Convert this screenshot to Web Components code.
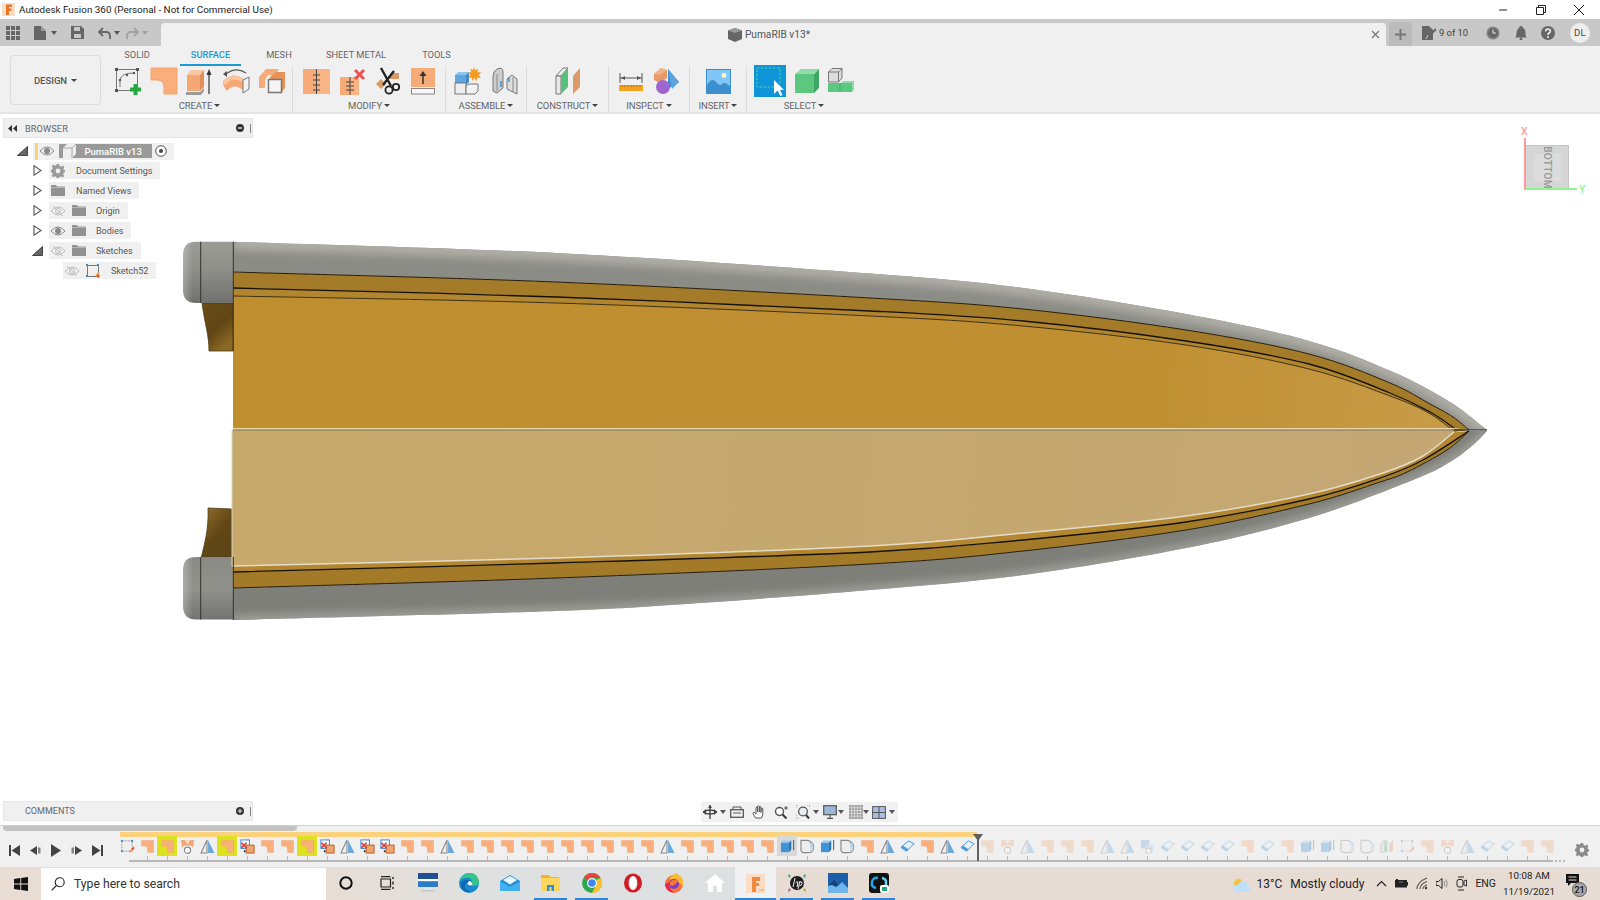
<!DOCTYPE html>
<html>
<head>
<meta charset="utf-8">
<title>Fusion 360</title>
<style>
  html, body { margin: 0; padding: 0; height: 100%; overflow: hidden; background: #fff; }
  body { font-family: Roboto, "Liberation Sans", sans-serif; }
  fx-app { width: 1600px; height: 900px; }
</style>
</head>
<body>
<fx-app></fx-app>
<script>
// --- icon table, every icon is the inside of an svg
const FILL = (a, b) => `<path d="M1 1H27V27H14V20Q14 13 7 13H1Z" fill="${a}" stroke="${b}"/>`;
const ICONS = {
  fill: [28, 28, FILL('#f9ae7c', '#f3a36d')],
  sketch: [28, 28, `<g fill="none" stroke="#777"><rect x="2.5" y="2.5" width="21" height="21"/><path d="M6 20V13Q7 6 20 6"/></g><g fill="#555"><rect x="1" y="1" width="3" height="3"/><rect x="22" y="1" width="3" height="3"/><rect x="1" y="22" width="3" height="3"/><circle cx="6" cy="13" r="1.2"/><circle cx="13" cy="8" r="1.2"/><circle cx="20" cy="6" r="1.2"/></g><rect x="19.5" y="17" width="4" height="11" fill="#27a845"/><rect x="16" y="20.5" width="11" height="4" fill="#27a845"/>`],
  extrude: [28, 28, `<path d="M1 8 5 3H18L14 8Z" fill="#f9c7a2"/><path d="M1 8H14V24H1Z" fill="#f6a874"/><path d="M14 8 18 3V20L14 24Z" fill="#e38f55"/><path d="M0 25H14L18 21V24L15 28H0Z" fill="#9b9b9b"/><path d="M23 27V6" stroke="#333" stroke-width="1.2"/><path d="M23 2 20.5 8H25.5Z" fill="#333"/>`],
  sweep: [28, 28, `<path d="M3 8Q13 -1 24 6" fill="none" stroke="#555" stroke-width="1.2"/><path d="M1 7 5 4 5 10Z" fill="#555"/><path d="M1 14Q11 4 22 12V24Q12 15 5 24Q1 20 1 14Z" fill="#f6a874"/><path d="M1 14Q11 4 22 12L20 15Q11 9 3 18Z" fill="#f9c7a2"/><path d="M21 13 27 10V22L21 26Z" fill="#f2f2f2" stroke="#777"/>`],
  patch: [28, 28, `<path d="M1 10 8 2H21L17 8H10L7 13V21H1Z" fill="#f7ab78"/><path d="M12 10 18 5H27V21L23 26H12Z" fill="#e6935a"/><rect x="10.5" y="12.5" width="13" height="13" fill="#f4f4f4" stroke="#777" stroke-width="1.5"/>`],
  stitch: [27, 27, `<rect x="0" y="1" width="13" height="25" fill="#f7ab78"/><rect x="14" y="1" width="13" height="25" fill="#f9b486"/><path d="M13.5 1V26M10 7H17M10 12H17M10 17H17M10 22H17" stroke="#444" fill="none"/>`],
  trim: [27, 27, `<rect x="1" y="9" width="10" height="18" fill="#f7ab78"/><rect x="11" y="9" width="9" height="18" fill="#f9b486"/><path d="M11 9V27M7 14H15M7 18H15M7 22H15" stroke="#444" fill="none"/><path d="M16 2 25 11M25 2 16 11" stroke="#ef5350" stroke-width="3"/>`],
  scissors: [26, 28, `<rect x="15" y="6" width="9" height="6" fill="#d99a66"/><path d="M1 17 6 12 11 17 6 22Z" fill="#d99a66"/><g fill="none" stroke="#222" stroke-width="2.4"><path d="M6 1 16 19M19 4 8 18"/></g><g fill="none" stroke="#222" stroke-width="1.8"><circle cx="14" cy="23" r="3.6"/><circle cx="21" cy="20" r="3.2"/></g>`],
  offset: [26, 27, `<rect x="1" y="0" width="24" height="19" fill="#f7ab78"/><path d="M13 16V7" stroke="#333" stroke-width="1.5"/><path d="M13 3 9.5 8H16.5Z" fill="#333"/><rect x="1.5" y="20.5" width="23" height="5.5" fill="#f6f6f6" stroke="#888"/>`],
  comp: [28, 28, `<path d="M1 8 4 5H15L12 8Z" fill="#8cc4ef"/><rect x="1" y="8" width="11" height="10" fill="#5ca6e2"/><path d="M12 8 15 5V15L12 18Z" fill="#3f88c6"/><rect x="1" y="16" width="11" height="11" fill="#eee" stroke="#777"/><path d="M12 19 15 17H24V24L21 27H12Z" fill="#f2f2f2" stroke="#777"/><path d="M20 0 21.3 3.5 24 1.5 23.5 5 27.5 5.7 24.5 8 27 11 23.3 10.6 22.8 14 20.5 11.3 18 14 17.7 10.5 14 11 16.5 8 13.5 6 17.3 5 16.5 1.5 19 3.2Z" fill="#f59a23"/>`],
  joint: [26, 28, `<path d="M1 10Q1 4 5 2L9 1Q11 2 11 5V21L5 26 1 24Z" fill="#ccc" stroke="#777"/><path d="M25 12V27L15 22V12L20 8Z" fill="#ddd" stroke="#777"/><path d="M9 14V20M17 10V15" stroke="#2f8fd6" stroke-width="1.4"/><path d="M5 7V24M21 10V25" stroke="#888"/>`],
  plane: [26, 28, `<path d="M1 9 8 1H13L6 9Z" fill="#eee" stroke="#777"/><path d="M1 9H6V27H1Z" fill="#e8e8e8" stroke="#777"/><path d="M6 9 13 1V20L6 27Z" fill="#58bf7d"/><path d="M18 9 25 1V20L18 27Z" fill="#de9a66"/>`],
  measure: [24, 20, `<path d="M1 2V12M23 2V12M1 7H23" stroke="#555" fill="none"/><path d="M2 7 6 5V9ZM22 7 18 5V9Z" fill="#555"/><rect x="0" y="14" width="24" height="6" fill="#f5a31d"/><path d="M3 14V16M6 14V16M9 14V16M12 14V16M15 14V16M18 14V16M21 14V16" stroke="#a8700d"/>`],
  section: [28, 28, `<path d="M2 7 9 1 15 3 15 11 8 16 2 13Z" fill="#e79a67"/><path d="M2 7 9 1 15 3 8 8Z" fill="#f2b48a"/><path d="M16 2 27 15 16 22Z" fill="#3f8fd0"/><path d="M16 2 20 22 27 15Z" fill="#5aa4df"/><circle cx="11" cy="20" r="7" fill="#a165cf"/>`],
  image: [25, 25, `<rect x=".5" y=".5" width="24" height="24" fill="#80c6f6" stroke="#3a8fd0"/><circle cx="18" cy="6.5" r="2.4" fill="#fff7c8"/><path d="M1 22V16Q6 8 10 13T16 15 24 17V24H1Z" fill="#3d90ce"/>`],
  select: [32, 32, `<rect width="32" height="32" fill="#0e94d8"/><rect x="3" y="3" width="23" height="19" fill="none" stroke="#57d38b" stroke-dasharray="2.5 1.5"/><path d="M20 15V29L23.5 25.5 26.5 31 28.5 30 26 25H30Z" fill="#fff"/>`],
  boxsel: [26, 26, `<path d="M1 6 7 1H25L19 6Z" fill="#8fdca6"/><rect x="1" y="6" width="19" height="19" fill="#5cc77e"/><path d="M20 6 25 1V20L20 25Z" fill="#3fa765"/>`],
  bodysel: [26, 26, `<rect x="0" y="15" width="24" height="9" fill="#5cc77e"/><path d="M13 15 15 13H26V22L24 24V15Z" fill="#8fdca6"/><path d="M12 15V24" stroke="#48ad6b"/><path d="M.5 4 4 .5H14V10L10.500 14H.5Z" fill="#ddd" stroke="#777"/><path d="M.5 4H10.500V14M10.500 4 14 .5" fill="none" stroke="#777"/>`],
  // strip icons
  apps: [14, 14, `<g fill="#666"><rect width="4" height="4"/><rect x="5" width="4" height="4"/><rect x="10" width="4" height="4"/><rect y="5" width="4" height="4"/><rect x="5" y="5" width="4" height="4"/><rect x="10" y="5" width="4" height="4"/><rect y="10" width="4" height="4"/><rect x="5" y="10" width="4" height="4"/><rect x="10" y="10" width="4" height="4"/></g>`],
  file: [12, 14, `<path d="M0 0H7L12 5V14H0Z" fill="#666"/><path d="M7 0V5H12" fill="#999"/>`],
  save: [13, 13, `<path d="M0 0H10L13 3V13H0Z" fill="#666"/><rect x="3" y="1" width="6" height="4" fill="#c8c8c8"/><rect x="3" y="8" width="7" height="4" fill="#c8c8c8"/>`],
  undo: [13, 12, `<path d="M5 1 1 5 5 9M1 5H8Q12 5 12 9V12" fill="none" stroke="#666" stroke-width="1.8"/>`],
  redo: [13, 12, `<path d="M8 1 12 5 8 9M12 5H5Q1 5 1 9V12" fill="none" stroke="#a2a2a2" stroke-width="1.8"/>`],
  caret: [6, 4, `<path d="M0 0H6L3 4Z" fill="#555"/>`],
  caretlight: [6, 4, `<path d="M0 0H6L3 4Z" fill="#a2a2a2"/>`],
  doc: [14, 14, `<path d="M7 0 14 2.5V11L7 14 0 11V2.5Z" fill="#666"/><path d="M0 2.5 7 5 14 2.5 7 0Z" fill="#999"/>`],
  x: [9, 9, `<path d="M1 1 8 8M8 1 1 8" stroke="#777" stroke-width="1.2"/>`],
  plus: [11, 11, `<path d="M5.5 0V11M0 5.5H11" stroke="#777" stroke-width="2"/>`],
  vers: [14, 14, `<path d="M0 0H7L11 4V14H0Z" fill="#666"/><path d="M5 12 14 3" stroke="#666" stroke-width="2.2"/><path d="M4 13 6 9" stroke="#ccc"/>`],
  jobs: [14, 14, `<circle cx="7" cy="7" r="6.6" fill="#888"/><circle cx="7" cy="7" r="5" fill="#666"/><path d="M7 3.5V7H10" fill="none" stroke="#ddd" stroke-width="1.1"/>`],
  bell: [12, 14, `<path d="M6 0Q8 0 8 2 10.5 3 10.5 7T12 11.5H0Q1.5 10.5 1.5 7T4 2Q4 0 6 0Z" fill="#666"/><circle cx="6" cy="13" r="1.4" fill="#666"/>`],
  help: [14, 14, `<circle cx="7" cy="7" r="7" fill="#666"/><path d="M4.6 5.4Q4.8 3 7 3T9.4 5.1Q9.4 6.3 8 7 7 7.6 7 9" fill="none" stroke="#eee" stroke-width="1.6"/><circle cx="7" cy="11" r="1" fill="#eee"/>`],
  // browser icons
  eye: [14, 10, `<path d="M0 5Q7 -3 14 5 7 13 0 5Z" fill="none" stroke="#888"/><circle cx="7" cy="5" r="3" fill="#888"/>`],
  eyeoff: [14, 10, `<path d="M0 5Q7 -3 14 5 7 13 0 5Z" fill="none" stroke="#bbb"/><circle cx="7" cy="5" r="2.5" fill="none" stroke="#bbb"/><path d="M2 0 12 10" stroke="#bbb"/>`],
  folder: [14, 11, `<path d="M0 0H5L6 1.5H14V11H0Z" fill="#919191"/><path d="M0 2.5H14" stroke="#b5b5b5"/>`],
  gear: [14, 14, `<path d="M5.8 0H8.2L8.6 2 10.3 2.7 12 1.6 13.4 3.3 12.2 4.9 13 6 14 6.2V8.2L12.9 8.6 12.2 10.2 13.2 12 11.6 13.4 10 12.3 8.5 13 8.2 14H5.8L5.4 12.9 3.9 12.3 2.2 13.3.7 11.8 1.8 10.1 1.1 8.6 0 8.2V5.8L1.2 5.4 1.8 3.8.7 2.3 2.3.8 3.9 1.8 5.4 1.1Z" fill="#9a9a9a"/><circle cx="7" cy="7" r="2.4" fill="#f0f0f0"/>`],
  gear2: [14, 14, `<path d="M5.8 0H8.2L8.6 2 10.3 2.7 12 1.6 13.4 3.3 12.2 4.9 13 6 14 6.2V8.2L12.9 8.6 12.2 10.2 13.2 12 11.6 13.4 10 12.3 8.5 13 8.2 14H5.8L5.4 12.9 3.9 12.3 2.2 13.3.7 11.8 1.8 10.1 1.1 8.6 0 8.2V5.8L1.2 5.4 1.8 3.8.7 2.3 2.3.8 3.9 1.8 5.4 1.1Z" fill="#8b8b8b"/><circle cx="7" cy="7" r="2.4" fill="#f0f0f0"/>`],
  target: [12, 12, `<circle cx="6" cy="6" r="5.3" fill="#fff" stroke="#555"/><circle cx="6" cy="6" r="2" fill="#444"/>`],
  sketchrow: [14, 14, `<rect x="1.5" y="1.5" width="11" height="11" fill="none" stroke="#777"/><path d="M10 12 13 9" stroke="#e8a045" stroke-width="2"/><g fill="#2f8fd6"><rect width="2" height="2"/><rect x="11" width="2" height="2"/><rect y="11" width="2" height="2"/></g><rect x="11" y="11" width="2.5" height="2.5" fill="#e8443a"/>`],
  cubew: [13, 14, `<path d="M0 4 4 0H13V10L9 14H0Z" fill="#eee"/><path d="M0 4H9V14M9 4 13 0" stroke="#aaa" fill="none"/>`],
  rewind: [9, 7, `<path d="M4 0V7L0 3.5ZM9 0V7L5 3.5Z" fill="#333"/>`],
  minus: [11, 11, `<circle cx="5.5" cy="5.5" r="5.5" fill="#333"/><rect x="2.5" y="4.6" width="6" height="1.8" fill="#eee"/>`],
  addc: [11, 11, `<circle cx="5.5" cy="5.5" r="5.5" fill="#333"/><path d="M2.5 5.5H8.5M5.5 2.5V8.5" stroke="#eee" stroke-width="1.5"/>`],
  // navigation bar
  orbit: [14, 14, `<path d="M7 0V14M0 7Q7 3 14 7 7 11 0 7" fill="none" stroke="#444" stroke-width="1.4"/><path d="M0 7 3 4V10ZM14 7 11 4V10ZM7 0 5 3H9Z" fill="#444"/>`],
  look: [14, 12, `<rect x=".7" y="3.7" width="12.6" height="7.6" fill="none" stroke="#555" stroke-width="1.3"/><path d="M3 3.5V1H11V3.5M3 7H11" fill="none" stroke="#555"/>`],
  hand: [14, 14, `<path d="M3.5 13 1 8.5Q1 7 2.4 7.6L4 9V2.5Q5 1.5 5.5 2.5V7 1.3Q6.6.4 7.3 1.3V7 2Q8.3 1 9 2V7.5 3.5Q10 2.6 10.8 3.6V9.5L9.5 13Z" fill="#fff" stroke="#555"/>`],
  zoomin: [14, 14, `<circle cx="5.5" cy="6.5" r="4" fill="#fff" stroke="#555" stroke-width="1.4"/><path d="M8.5 9.5 12.5 13.5" stroke="#333" stroke-width="2"/><path d="M12 1V5M10 3H14" stroke="#555"/>`],
  fit: [14, 14, `<circle cx="7" cy="6.5" r="4.4" fill="#e8eef4" stroke="#555" stroke-width="1.3"/><path d="M10 10 13 13.5" stroke="#333" stroke-width="2"/><path d="M0 3V0H3M11 0H14V3M0 10V14H3" fill="none" stroke="#888" stroke-dasharray="1 1"/>`],
  display: [14, 14, `<rect x=".7" y=".7" width="12.6" height="9" fill="#9cb7da" stroke="#555" stroke-width="1.2"/><path d="M7 10V13M4 13.3H10" stroke="#555" stroke-width="1.2"/>`],
  grid: [14, 14, `<rect width="14" height="14" fill="#999"/><path d="M2.8 0V14M5.6 0V14M8.4 0V14M11.2 0V14M0 2.8H14M0 5.6H14M0 8.4H14M0 11.2H14" stroke="#eee" stroke-width=".7"/>`],
  views: [14, 13, `<rect x=".6" y=".6" width="12.8" height="11.8" fill="#a7bfe0" stroke="#555"/><path d="M7 0V13M0 6.5H14" stroke="#555"/>`],
  // timeline
  tlsketch: [16, 16, `<rect x="2" y="2" width="11" height="11" fill="none" stroke="#999" stroke-dasharray="2 1"/><path d="M10 14 14 10" stroke="#e8a045" stroke-width="2"/><path d="M13 11 15 9" stroke="#e8443a" stroke-width="2"/><g fill="#2f8fd6"><rect x="1" y="1" width="2" height="2"/><rect x="12" y="1" width="2" height="2"/><rect x="1" y="12" width="2" height="2"/></g>`],
  tltrim: [16, 16, `<path d="M1 1H15L14 9 11 7 5 7 2 9Z" fill="#f0a878"/><path d="M5 1 8 6 11 1Z" fill="#fbd7bd"/><circle cx="8" cy="12" r="3.3" fill="#fff" stroke="#888" stroke-width="1.2"/>`],
  tlmirror: [14, 14, `<path d="M6.5 1V13H1Z" fill="#eee" stroke="#888"/><path d="M7.5 1V13H13.5Z" fill="#6ca9da"/>`],
  tldel: [16, 16, `<rect x="1" y="1" width="9" height="9" fill="#fff" stroke="#2f7fd0"/><rect x="6.5" y="6.5" width="8.5" height="8.5" fill="#f2a46f" stroke="#b85a26"/><path d="M1.5 4 7 9.5M7 4 1.5 9.5" stroke="#d93d3d" stroke-width="1.7"/><circle cx="5" cy="13" r="1" fill="#222"/>`],
  tlext: [16, 16, `<path d="M1 4 3.5 1.5H12L9.5 4Z" fill="#9cccf2"/><rect x="1" y="4" width="8.5" height="10" fill="#3f93d8"/><path d="M9.5 4 12 1.5V11.5L9.5 14Z" fill="#2a74b5"/><path d="M14.5 12V1" stroke="#666" stroke-width="1.2"/>`],
  tld: [16, 16, `<path d="M1 1.5H8Q14.5 3 14.5 9T8 14.5H3L1 12Z" fill="#eee" stroke="#888" stroke-width="1.2"/><path d="M9 2Q14.5 4 14.5 9 14.5 13 10 14.5Q13 9 9 2Z" fill="#bcd6ec"/>`],
  tlerase: [16, 14, `<path d="M1 8 9 1 15 4 7 12Z" fill="#e8f2fa" stroke="#3f93d8"/><path d="M1 8 7 12 9 10 3 6Z" fill="#4f9bd8"/>`],
  tlbody: [16, 16, `<rect x="1" y="1" width="9" height="9" fill="#6ca9da"/><rect x="6" y="6" width="8" height="8" fill="#a7cdea"/><rect x="6.5" y="10" width="5" height="5" fill="#fff" stroke="#888"/>`],
  tlplane: [16, 16, `<path d="M1 5 5 1V13L1 15Z" fill="#ddd" stroke="#888"/><path d="M5 3 8 1V13L5 15Z" fill="#58bf7d"/><path d="M10 5 14 1V12L10 15Z" fill="#de9a66"/>`],
  // transport
  first: [11, 11, `<rect width="2" height="11" fill="#444"/><path d="M11 0V11L2.5 5.5Z" fill="#444"/>`],
  prev: [11, 9, `<path d="M7 0V9L0 4.5Z" fill="#444"/><rect x="8" y="1.5" width="2.5" height="6" fill="#888"/>`],
  play: [10, 13, `<path d="M0 0V13L10 6.5Z" fill="#444"/>`],
  next: [11, 9, `<path d="M4 0V9L11 4.5Z" fill="#444"/><rect x=".5" y="1.5" width="2.5" height="6" fill="#888"/>`],
  last: [11, 11, `<rect x="9" width="2" height="11" fill="#444"/><path d="M0 0V11L8.5 5.5Z" fill="#444"/>`],
  // taskbar
  win: [14, 14, `<path d="M0 2 6.3 1V6.6H0ZM7.2.9 14 0V6.6H7.2ZM0 7.4H6.3V13L0 12ZM7.2 7.4H14V14L7.2 13.1Z" fill="#111"/>`],
  search: [14, 14, `<circle cx="8.7" cy="5.3" r="4.5" fill="none" stroke="#222" stroke-width="1.1"/><path d="M5.4 8.6 .6 13.4" stroke="#222" stroke-width="1.2"/>`],
  cortana: [14, 14, `<circle cx="7" cy="7" r="5.7" fill="none" stroke="#111" stroke-width="2"/>`],
  taskview: [14, 14, `<path d="M1 3H10.5V11H1ZM1 .7H10.5M1 13.3H10.5" fill="none" stroke="#222" stroke-width="1.2"/><path d="M13 1V3M13 5.5V8.5M13 11V13" stroke="#222" stroke-width="1.4"/>`],
  store: [20, 20, `<rect width="20" height="14" fill="#1f4f96"/><rect y="6" width="20" height="2.5" fill="#fff"/><rect y="8.5" width="20" height="5.5" fill="#2c7bc7"/><rect x="6" y="15" width="8" height="2" fill="#dfe5ea"/><rect x="3" y="17" width="14" height="1.5" fill="#c3c8cc"/>`],
  edge: [20, 20, `<circle cx="10" cy="10" r="10" fill="#1a8ad0"/><path d="M1 7Q4 0 11 0 19 0 20 9 20 13 15 13 11 13 12 10 14 9 12 6 8 3 1 7Z" fill="#35c38b"/><path d="M12 10Q8 8 6 12T12 19Q6 20 2 15Q0 9 6 7 11 6 13 9Z" fill="#0f6ab4"/><path d="M11 8Q14 10 13 12 10 13 8.5 11 9 8 11 8Z" fill="#f4fbff"/>`],
  mail: [20, 16, `<path d="M0 6 10 0 20 6V16H0Z" fill="#1f8fd8"/><path d="M0 6 10 12 20 6V16H0Z" fill="#42b0ea"/><path d="M3 5 10 1 17 5 10 9.5Z" fill="#eaf6ff"/>`],
  explorer: [20, 18, `<path d="M0 1H8L10 3H18V7H0Z" fill="#f0b429"/><rect y="4" width="19" height="13" fill="#ffd75e"/><rect x="6" y="11" width="7" height="6" fill="#2f8fd6"/><rect x="8.5" y="13" width="2" height="4" fill="#ffd75e"/>`],
  chrome: [20, 20, `<circle cx="10" cy="10" r="10" fill="#2fa84f"/><path d="M10 0A10 10 0 0 1 18.7 5H10A5 5 0 0 0 5.5 8L1.8 4.3A10 10 0 0 1 10 0Z" fill="#e5473a"/><path d="M18.7 5A10 10 0 0 1 10 20L14 12A5 5 0 0 0 14 7Z" fill="#fbc02d"/><circle cx="10" cy="10" r="5" fill="#fff"/><circle cx="10" cy="10" r="3.8" fill="#4285f4"/>`],
  opera: [20, 20, `<ellipse cx="10" cy="10" rx="9" ry="9.6" fill="#d01c26"/><ellipse cx="10" cy="10" rx="4.4" ry="7" fill="#f4ecec"/><ellipse cx="10" cy="10" rx="3" ry="6.5" fill="#fff"/>`],
  firefox: [20, 20, `<circle cx="10" cy="11" r="9" fill="#f6743a"/><path d="M17 3Q20 8 19 13 12 6 5 6 10 0 13 0 13 2 17 3Z" fill="#fdb933"/><circle cx="10" cy="11" r="5" fill="#7a3fc4"/><path d="M6 9Q10 5 14 8 12 12 8 13 5 12 6 9Z" fill="#f6743a"/><path d="M1 11Q1 18 10 20 4 15 6 9Z" fill="#e22850"/>`],
  home: [20, 18, `<path d="M10 0 20 9H17V18H12V12H8V18H3V9H0Z" fill="#fff"/>`],
  fusion: [19, 19, `<rect width="19" height="19" fill="#fbdcc4"/><path d="M6 3H14V7H10V9H13V12H10V18H6Z" fill="#f0883e"/><rect x="13" y="15" width="5" height="2" fill="#f0c09a"/>`],
  hp: [20, 20, `<circle cx="10" cy="10" r="7" fill="#1d1d1d"/><path d="M1 1 4 3 2 5ZM19 1 16 3 18 5Z" fill="#2f9a8a"/><path d="M1 19 4 17 2 15Z" fill="#b84a8a"/><path d="M19 19 16 17 18 15Z" fill="#c0a030"/><path d="M8 5 6 14M8.5 10Q10 8 11 9L10 14M13 8 11 16M13 9Q15.5 8 15 10.5T12.5 12.5" fill="none" stroke="#eee" stroke-width="1"/>`],
  photos: [20, 20, `<rect width="20" height="20" fill="#1c5fa8"/><path d="M0 20V13L6 6 11 12 14 9 20 15V20Z" fill="#6fb7ea"/><path d="M0 13 6 6 11 12 8 14 4 12Z" fill="#12437c"/>`],
  conf: [20, 20, `<rect width="20" height="20" rx="3" fill="#121212"/><path d="M9 5Q4 4 3 9T7 15" fill="none" stroke="#1ea8e8" stroke-width="2.5"/><path d="M11 15Q16 16 17 11T13 5" fill="none" stroke="#6ad1f0" stroke-width="2.5"/><rect x="11" y="12" width="9" height="8" rx="2" fill="#fff"/><rect x="13" y="14" width="5" height="4" fill="#1fa67a"/>`],
  cloud: [20, 16, `<path d="M5 12Q0 8 5 4 7 1 11 4L7 9Z" fill="#f5c33b"/><path d="M6 16Q0 14 3 10 5 8 7 9 9 4 14 6 17 7 16 10 20 11 19 14 18 16 15 16Z" fill="#bde0f8"/>`],
  up: [11, 7, `<path d="M1 6 5.5 1.5 10 6" fill="none" stroke="#222" stroke-width="1.2"/>`],
  battery: [13, 9, `<rect y="1" width="12" height="7.5" fill="#222"/><rect x="12" y="3" width="1.5" height="3.5" fill="#222"/><rect x="1" y="0" width="2" height="1" fill="#222"/><path d="M4 3H8" stroke="#777"/>`],
  wifi: [13, 13, `<path d="M1 12Q1 5 11 1M4 12Q4 7 11 4.5M7 12Q7 9 11 8" fill="none" stroke="#555" stroke-width="1.1"/><circle cx="10" cy="11" r="1.2" fill="#333"/>`],
  volume: [13, 13, `<path d="M0 4.5H2.5L6 1.5V11.5L2.5 8.5H0Z" fill="none" stroke="#222"/><path d="M8 4Q9.5 6.5 8 9M10 2.5Q12.5 6.5 10 10.5" fill="none" stroke="#888"/>`],
  meet: [11, 15, `<path d="M2 1H8M2 14H8" stroke="#222"/><rect x="1" y="3.5" width="6" height="7.5" rx="2" fill="none" stroke="#222"/><path d="M8 5 10.5 4V10L8 9Z" fill="none" stroke="#222" stroke-width=".9"/>`],
  note: [13, 12, `<path d="M0 0H13V9H5L2 12V9H0Z" fill="#111"/><path d="M2.5 3H10.5M2.5 6H10.5" stroke="#e8dcd2"/>`],
  fmark: [13, 13, `<rect width="13" height="13" fill="#fbdcc4"/><path d="M4 1.5H10V4H7V5.5H9.5V8H7V12H4Z" fill="#e8762c"/>`],
  min: [10, 10, `<path d="M1 5H9" stroke="#222"/>`],
  restore: [10, 10, `<path d="M.5 2.5H7.5V9.5H.5ZM2.5 2.5V.5H9.5V7.5H7.5" fill="none" stroke="#222"/>`],
  close: [12, 12, `<path d="M1 1 11 11M11 1 1 11" stroke="#222"/>`],
};

class FxIcon extends HTMLElement {
  connectedCallback() {
    const name = this.getAttribute('name');
    const [w, h, body] = ICONS[name];
    const dw = this.getAttribute('w') || w;
    const dh = this.getAttribute('h') || h;
    if (!this.shadowRoot) this.attachShadow({ mode: 'open' });
    this.shadowRoot.innerHTML = `
      <style>:host { display: inline-flex; flex: none; } svg { display: block; }</style>
      <svg width="${dw}" height="${dh}" viewBox="0 0 ${w} ${h}">${body}</svg>`;
  }
}
customElements.define('fx-icon', FxIcon);

// plain shadow element with a fixed template
function plain(tag, html) {
  customElements.define(tag, class extends HTMLElement {
    constructor() {
      super();
      this.attachShadow({ mode: 'open' }).innerHTML = html;
    }
  });
}

plain('fx-app', `
  <style>:host { display: flex; flex-direction: column; overflow: hidden; color: #555; }</style>
  <fx-titlebar></fx-titlebar>
  <fx-tabstrip></fx-tabstrip>
  <fx-toolbar></fx-toolbar>
  <fx-viewport></fx-viewport>
  <fx-timeline></fx-timeline>
  <fx-taskbar></fx-taskbar>`);

plain('fx-titlebar', `
  <style>
    :host { display: flex; align-items: center; height: 19px; background: #fff; padding-left: 2px; flex: none;
      font: 9.9px Roboto, "Liberation Sans", sans-serif; color: #222; }
    span { margin-left: 4px; flex: 1; }
    .c { width: 38px; display: flex; justify-content: center; }
    .c.last { margin-right: 2px; }
  </style>
  <fx-icon name="fmark"></fx-icon><span>Autodesk Fusion 360 (Personal - Not for Commercial Use)</span>
  <div class="c"><fx-icon name="min"></fx-icon></div>
  <div class="c"><fx-icon name="restore"></fx-icon></div>
  <div class="c last"><fx-icon name="close"></fx-icon></div>`);

plain('fx-tabstrip', `
  <style>
    :host { display: flex; height: 27px; background: #c8c8c8; flex: none; align-items: stretch; font: 10.5px Roboto, sans-serif; color: #555; }
    .quick { width: 161px; display: flex; align-items: center; padding-left: 6px; box-sizing: border-box; }
    .doc { width: 1225px; margin-top: 4px; background: #f0f0f0; border-radius: 4px 4px 0 0; display: flex; align-items: center; justify-content: center; position: relative; padding-right: 9px; box-sizing: border-box; }
    .doc span { margin-left: 3px; font-size: 10.2px; color: #555; }
    .doc .shut { position: absolute; right: 6px; top: 7px; }
    .add { width: 23px; margin: 3px 0 0 3px; background: #bbb; border-radius: 3px 3px 0 0; display: flex; align-items: center; justify-content: center; }
    .right { display: flex; align-items: center; flex: 1; padding-left: 10px; }
    .right b { font-weight: 400; font-size: 9.4px; margin-left: 3px; color: #444; width: 47px; }
    .avatar { width: 20px; height: 20px; border-radius: 50%; background: #eee; margin-left: 15px; display: flex; align-items: center; justify-content: center; font-size: 9.5px; color: #444; letter-spacing: .4px; }
  </style>
  <div class="quick">
    <fx-icon name="apps"></fx-icon>
    <fx-icon name="file" style="margin-left:14px"></fx-icon><fx-icon name="caret" style="margin-left:5px"></fx-icon>
    <fx-icon name="save" style="margin-left:14px"></fx-icon>
    <fx-icon name="undo" style="margin-left:14px"></fx-icon><fx-icon name="caret" style="margin-left:3px"></fx-icon>
    <fx-icon name="redo" style="margin-left:6px"></fx-icon><fx-icon name="caretlight" style="margin-left:3px"></fx-icon>
  </div>
  <div class="doc"><fx-icon name="doc"></fx-icon><span>PumaRIB v13*</span><fx-icon class="shut" name="x"></fx-icon></div>
  <div class="add"><fx-icon name="plus"></fx-icon></div>
  <div class="right">
    <fx-icon name="vers"></fx-icon><b>9 of 10</b>
    <fx-icon name="jobs"></fx-icon><fx-icon name="bell" style="margin-left:15px"></fx-icon><fx-icon name="help" style="margin-left:14px"></fx-icon>
    <div class="avatar">DL</div>
  </div>`);

class FxTab extends HTMLElement {
  constructor() {
    super();
    this.attachShadow({ mode: 'open' }).innerHTML = `
      <style>
        :host { display: flex; align-items: center; justify-content: center; height: 20px; padding-bottom: 4px; box-sizing: border-box;
          font: 9.3px Roboto, sans-serif; color: #666; }
        :host([active]) { color: #1c9ad6; font-weight: 500; box-shadow: inset 0 -2px 0 #1c9ad6; }
      </style><slot></slot>`;
  }
}
customElements.define('fx-tab', FxTab);

class FxGroup extends HTMLElement {
  constructor() {
    super();
    this.attachShadow({ mode: 'open' }).innerHTML = `
      <style>
        :host { display: flex; flex-direction: column; flex: none; box-sizing: border-box; border-right: 1px solid #dcdcdc; height: 46px; }
        :host(:last-child) { border: 0; }
        .icons { height: 32px; display: flex; align-items: center; justify-content: center; padding-bottom: 2px; box-sizing: border-box; }
        .label { flex: 1; display: flex; align-items: center; justify-content: center; gap: 2px; font: 9.5px Roboto, sans-serif; letter-spacing: -.1px; color: #666; }
        .label i { border: 3px solid transparent; border-top: 3.5px solid #444; border-bottom: 0; }
      </style>
      <div class="icons"><slot></slot></div>
      <div class="label"><span id="t"></span><i></i></div>`;
  }
  connectedCallback() {
    this.shadowRoot.getElementById('t').textContent = this.getAttribute('label');
  }
}
customElements.define('fx-group', FxGroup);

plain('fx-toolbar', `
  <style>
    :host { display: flex; height: 68px; background: #f0f0f0; border-bottom: 2px solid #e4e4e4; box-sizing: border-box; flex: none; }
    .design { width: 91px; height: 50px; margin: 9px 0 0 10px; border: 1.5px solid #dcdcdc; border-radius: 4px; box-sizing: border-box; display: flex; align-items: center; justify-content: center; gap: 4px; font: 500 9.5px Roboto, sans-serif; color: #555; }
    .design i { border: 3px solid transparent; border-top: 3.5px solid #444; border-bottom: 0; margin-top: 1px; }
    .main { display: flex; flex-direction: column; margin-left: 6px; }
    .tabs { display: flex; height: 20px; margin-left: 6px; }
    .row { display: flex; }
    fx-icon + fx-icon { margin-left: var(--g, 9px); }
  </style>
  <div class="design">DESIGN<i></i></div>
  <div class="main">
    <div class="tabs">
      <fx-tab style="width:48px;margin-right:19px">SOLID</fx-tab>
      <fx-tab active style="width:61px;margin-right:16px">SURFACE</fx-tab>
      <fx-tab style="width:44px;margin-right:16px">MESH</fx-tab>
      <fx-tab style="width:78px;margin-right:17px">SHEET METAL</fx-tab>
      <fx-tab style="width:49px">TOOLS</fx-tab>
    </div>
    <div class="row">
      <fx-group label="CREATE" style="width:186px;--g:8px">
        <fx-icon name="sketch"></fx-icon><fx-icon name="fill"></fx-icon><fx-icon name="extrude"></fx-icon><fx-icon name="sweep"></fx-icon><fx-icon name="patch"></fx-icon>
      </fx-group>
      <fx-group label="MODIFY" style="width:153px;--g:9px">
        <fx-icon name="stitch"></fx-icon><fx-icon name="trim"></fx-icon><fx-icon name="scissors"></fx-icon><fx-icon name="offset"></fx-icon>
      </fx-group>
      <fx-group label="ASSEMBLE" style="width:81px;--g:10px">
        <fx-icon name="comp"></fx-icon><fx-icon name="joint"></fx-icon>
      </fx-group>
      <fx-group label="CONSTRUCT" style="width:82px">
        <fx-icon name="plane"></fx-icon>
      </fx-group>
      <fx-group label="INSPECT" style="width:81px;--g:9px">
        <fx-icon name="measure"></fx-icon><fx-icon name="section"></fx-icon>
      </fx-group>
      <fx-group label="INSERT" style="width:57px">
        <fx-icon name="image"></fx-icon>
      </fx-group>
      <fx-group label="SELECT" style="width:114px;--g:8px">
        <fx-icon name="select"></fx-icon><fx-icon name="boxsel"></fx-icon><fx-icon name="bodysel"></fx-icon>
      </fx-group>
    </div>
  </div>`);

plain('fx-viewport', `
  <style>
    :host { display: block; flex: 1; position: relative; background: #fff; overflow: hidden; }
    fx-model { position: absolute; left: 0; top: 0; }
    fx-browser { position: absolute; left: 3px; top: 4px; }
    fx-viewcube { position: absolute; right: 0; top: 0; }
    fx-comments { position: absolute; left: 3px; top: 687px; }
    fx-navbar { position: absolute; left: 701px; top: 688px; }
  </style>
  <fx-model></fx-model>
  <fx-browser></fx-browser>
  <fx-viewcube></fx-viewcube>
  <fx-comments></fx-comments>
  <fx-navbar></fx-navbar>`);

// smooth line through points, catmull-rom turned into cubics
function curve(pts, first = true) {
  let d = first ? `M${pts[0]} ` : `L${pts[0]} `;
  for (let i = 0; i < pts.length - 1; i++) {
    const p0 = pts[i - 1] || pts[i], p1 = pts[i], p2 = pts[i + 1], p3 = pts[i + 2] || p2;
    const c1 = [p1[0] + (p2[0] - p0[0]) / 6, p1[1] + (p2[1] - p0[1]) / 6];
    const c2 = [p2[0] - (p3[0] - p1[0]) / 6, p2[1] - (p3[1] - p1[1]) / 6];
    d += `C${c1} ${c2} ${p2} `;
  }
  return d;
}
const rev = a => a.slice().reverse();

const GREY_TOP = [[233,241.7],[556,253],[870,273.5],[1023,288],[1186,314],[1309,341],[1393,372],[1450,402],[1487,430]];
const GOLD_TOP = [[233,272],[556,282],[870,298],[1023,309],[1186,330],[1309,354],[1390,383],[1430,404],[1453,417],[1469,430]];
const LINE_TOP = [[233,288],[556,297],[870,311],[1023,321],[1186,341],[1309,364],[1390,393],[1430,412],[1454,428]];
const FACE_TOP = [[233,296],[556,303],[870,316],[1023,326],[1186,345],[1309,369],[1390,396],[1427,412],[1450,428]];
const FACE_BOT = [[232,566],[556,558],[870,546],[1023,533],[1186,516],[1309,494],[1383,473],[1423,456],[1454,432]];
const LINE_BOT = [[233,572],[556,563],[870,552],[1023,540],[1186,522],[1309,499],[1383,477],[1423,460],[1469,431]];
const GOLD_BOT = [[233,588],[556,578],[870,564],[1023,551],[1186,530],[1309,504],[1380,482],[1407,472],[1447,450],[1469,431]];
const GREY_BOT = [[233,620],[556,611],[700,603],[870,590],[1023,575],[1186,548],[1309,518],[1413,480],[1450,462],[1473,445],[1487,431]];

const band = (a, b) => curve(a) + curve(rev(b), false) + 'Z';

plain('fx-model', `
  <style>:host { display: block; width: 1600px; height: 711px; } svg { display: block; }</style>
  <svg width="1600" height="711" viewBox="0 114 1600 711">
    <defs>
      <linearGradient id="hTop" x1="0" y1="0" x2="0" y2="1"><stop offset="0" stop-color="#9c9c96"/><stop offset=".45" stop-color="#8f8f8a"/><stop offset="1" stop-color="#70706c"/></linearGradient>
      <linearGradient id="hBot" x1="0" y1="0" x2="0" y2="1"><stop offset="0" stop-color="#8a8a85"/><stop offset=".5" stop-color="#92928d"/><stop offset="1" stop-color="#73736f"/></linearGradient>
      <linearGradient id="hEnd" x1="0" y1="0" x2="1" y2="0"><stop offset="0" stop-color="#fff" stop-opacity=".25"/><stop offset="1" stop-color="#fff" stop-opacity="0"/></linearGradient>
      <linearGradient id="wedge1" x1="0" y1="0" x2=".6" y2="1"><stop offset="0" stop-color="#6a4c16"/><stop offset=".6" stop-color="#604515"/><stop offset="1" stop-color="#8c6a24"/></linearGradient>
      <linearGradient id="wedge2" x1="0" y1="0" x2=".7" y2="1"><stop offset="0" stop-color="#93702a"/><stop offset=".6" stop-color="#614616"/><stop offset="1" stop-color="#5f4516"/></linearGradient>
      <linearGradient id="face" gradientUnits="userSpaceOnUse" x1="233" y1="300" x2="1450" y2="430"><stop offset="0" stop-color="#bf8e2f"/><stop offset=".75" stop-color="#bf8f31"/><stop offset="1" stop-color="#c89c48"/></linearGradient>
      <linearGradient id="pale" gradientUnits="userSpaceOnUse" x1="233" y1="430" x2="1450" y2="540"><stop offset="0" stop-color="#c7a96b"/><stop offset="1" stop-color="#c4a773"/></linearGradient>
      <clipPath id="cTop"><path d="${band(GREY_TOP, GOLD_TOP)}"/></clipPath>
      <clipPath id="cBot"><path d="${band(GREY_BOT, GOLD_BOT)}"/></clipPath>
      <filter id="soft" x="-5%" y="-20%" width="110%" height="140%"><feGaussianBlur stdDeviation="4"/></filter>
    </defs>

    <path d="M202 303C205 325 209 335 209 351L233 351V303Z" fill="url(#wedge1)" stroke="#4a3a18" stroke-width=".8"/>
    <path d="M208 508C209 530 204 545 201.500 557L232 557V509Z" fill="url(#wedge2)" stroke="#4a3a18" stroke-width=".8"/>

    <path d="M233 241.700H196Q183 241.700 183 255V290Q183 303 196 303H233Z" fill="url(#hTop)"/>
    <path d="M233 557H196Q183 557 183 570V606Q183 619.500 196 619.500H233Z" fill="url(#hBot)"/>
    <rect x="183" y="241.700" width="10" height="61.300" fill="url(#hEnd)" rx="4"/>
    <rect x="183" y="557" width="10" height="62.500" fill="url(#hEnd)" rx="4"/>

    <path d="${band(GREY_TOP, GOLD_TOP)}" fill="#8c8c87"/>
    <g clip-path="url(#cTop)"><path d="${curve(GREY_TOP)}" fill="none" stroke="#aeada6" stroke-width="16" filter="url(#soft)"/></g>
    <path d="${band(GREY_BOT, GOLD_BOT)}" fill="#7f7f7a"/>
    <g clip-path="url(#cBot)"><path d="${curve(GREY_BOT)}" fill="none" stroke="#a5a59e" stroke-width="8" filter="url(#soft)"/></g>

    <path d="${band(GOLD_TOP, LINE_TOP)}" fill="#a37b29"/>
    <path d="${band(LINE_TOP, FACE_TOP)}" fill="#b2862e"/>
    <path d="M1450 428L1469 430L1454 432Z" fill="#a37b29"/>
    <path d="${curve(FACE_TOP)}L1454 429L233 429Z" fill="url(#face)"/>
    <path d="${band(LINE_BOT, GOLD_BOT)}" fill="#a27a28"/>
    <path d="${band(FACE_BOT, LINE_BOT)}" fill="#b28730"/>
    <path d="M232 430H1454${curve(rev(FACE_BOT), false)}Z" fill="url(#pale)"/>

    <g fill="none">
      <path d="${curve(GOLD_TOP)}" stroke="#241c0a" stroke-width="1"/>
      <path d="${curve(LINE_TOP)}" stroke="#14100a" stroke-width="1.300"/>
      <path d="${curve(FACE_TOP)}" stroke="#3b2e12" stroke-width="1"/>
      <path d="${curve(GOLD_BOT)}" stroke="#241c0a" stroke-width="1"/>
      <path d="${curve(LINE_BOT)}" stroke="#14100a" stroke-width="1.300"/>
      <path d="${curve(FACE_BOT)}" stroke="#e3dccd" stroke-width="1.500"/>
      <path d="M232 566V430" stroke="#d9d4c8" stroke-width="1"/>
    </g>
    <rect x="233" y="428" width="1221" height="1.400" fill="#ecd9a8"/>
    <rect x="233" y="429.400" width="1221" height="1" fill="#6e6a60"/>
    <path d="M1454 430H1487" stroke="#111" stroke-width="1"/>
    <path d="M200.700 241.700V303M233.300 241.700V351M200.700 557V619.500M233.300 557V620" stroke="#33332f" stroke-width="1"/>
  </svg>`);

class FxRow extends HTMLElement {
  connectedCallback() {
    const indent = this.getAttribute('indent') || 0;
    const state = this.getAttribute('twist');
    const twist = state === 'open'
      ? '<svg width="11" height="10" viewBox="0 0 11 10"><path d="M.5 9.500H10.500V.5Z" fill="#666" stroke="#444"/></svg>'
      : state === 'closed'
        ? '<svg width="9" height="11" viewBox="0 0 9 11"><path d="M1 .8V10.200L8 5.500Z" fill="#fff" stroke="#555" stroke-width="1.100"/></svg>' : '';
    this.attachShadow({ mode: 'open' }).innerHTML = `
      <style>
        :host { display: flex; align-items: center; height: 20px; font: 9px Roboto, sans-serif; color: #555; }
        .tw { width: 15px; margin-left: ${indent}px; display: flex; justify-content: center; flex: none; }
        .box { display: flex; align-items: center; height: 17px; background: #f0f0f0; margin-left: 4px; padding: 0 8px 0 2px; }
        ::slotted(fx-icon) { margin-right: 7px; }
        .t { margin-left: var(--tx, 3px); white-space: nowrap; }
      </style>
      <div class="tw">${twist}</div>
      <div class="box"><slot name="i"></slot><span class="t"><slot></slot></span></div>`;
  }
}
customElements.define('fx-row', FxRow);

plain('fx-browser', `
  <style>
    :host { display: block; width: 250px; }
    .head { display: flex; align-items: center; height: 20px; background: #f0f0f0; border: 1px solid #e6e6e6; box-sizing: border-box; padding-left: 4px; font: 9.2px Roboto, sans-serif; color: #666; }
    .head span { margin-left: 8px; flex: 1; letter-spacing: .1px; }
    .head b { width: 1px; height: 9px; background: #888; margin: 0 1px 0 6px; }
    .tree { padding-top: 3px; }
    .root { display: flex; align-items: center; height: 20px; margin-left: 14px; margin-bottom: -.5px; }
    .root .tw { width: 11px; }
    .rbox { display: flex; align-items: center; height: 17px; margin-left: 5px; background: #f0f0f0; width: 141px; }
    .bar { width: 2.500px; height: 17px; background: #fbd17a; margin-left: 2px; }
    .name { width: 93px; height: 14px; background: #9a9a9a; margin-left: 5px; display: flex; align-items: center; font: 500 9.5px Roboto, sans-serif; color: #fff; flex: none; }
    .name span { margin-left: 9px; }
  </style>
  <div class="head"><fx-icon name="rewind"></fx-icon><span>BROWSER</span><fx-icon name="minus" w="8" h="8"></fx-icon><b></b></div>
  <div class="tree">
    <div class="root">
      <div class="tw"><svg width="11" height="10" viewBox="0 0 11 10" style="display:block"><path d="M.5 9.500H10.500V.5Z" fill="#666" stroke="#444"/></svg></div>
      <div class="rbox"><div class="bar"></div><fx-icon name="eye" style="margin-left:2px"></fx-icon>
        <div class="name"><fx-icon name="cubew" style="margin-left:4px"></fx-icon><span>PumaRIB v13</span></div>
        <fx-icon name="target" style="margin-left:3px"></fx-icon></div>
    </div>
    <fx-row indent="27" twist="closed" style="--tx:4px"><fx-icon slot="i" name="gear"></fx-icon>Document Settings</fx-row>
    <fx-row indent="27" twist="closed" style="--tx:4px"><fx-icon slot="i" name="folder"></fx-icon>Named Views</fx-row>
    <fx-row indent="27" twist="closed"><fx-icon slot="i" name="eyeoff"></fx-icon><fx-icon slot="i" name="folder"></fx-icon>Origin</fx-row>
    <fx-row indent="27" twist="closed"><fx-icon slot="i" name="eye"></fx-icon><fx-icon slot="i" name="folder"></fx-icon>Bodies</fx-row>
    <fx-row indent="27" twist="open"><fx-icon slot="i" name="eyeoff"></fx-icon><fx-icon slot="i" name="folder"></fx-icon>Sketches</fx-row>
    <fx-row indent="41" style="--tx:4px"><fx-icon slot="i" name="eyeoff"></fx-icon><fx-icon slot="i" name="sketchrow"></fx-icon>Sketch52</fx-row>
  </div>`);

plain('fx-comments', `
  <style>
    :host { display: flex; align-items: center; width: 250px; height: 20px; background: #f0f0f0; border: 1px solid #e6e6e6; box-sizing: border-box; padding-left: 21px; font: 9px Roboto, sans-serif; color: #666; }
    span { flex: 1; }
    b { width: 1px; height: 9px; background: #888; margin: 0 1px 0 6px; }
  </style>
  <span>COMMENTS</span><fx-icon name="addc" w="8" h="8"></fx-icon><b></b>`);

plain('fx-navbar', `
  <style>
    :host { display: flex; align-items: center; width: 197px; height: 20px; background: #f1f1f1; box-sizing: border-box; }
  </style>
  <fx-icon name="orbit" style="margin-left:2px"></fx-icon><fx-icon name="caret" style="margin-left:3px"></fx-icon>
  <fx-icon name="look" style="margin-left:4px"></fx-icon><fx-icon name="hand" style="margin-left:8px"></fx-icon>
  <fx-icon name="zoomin" style="margin-left:8px"></fx-icon><fx-icon name="fit" style="margin-left:8px"></fx-icon><fx-icon name="caret" style="margin-left:3px"></fx-icon>
  <fx-icon name="display" style="margin-left:4px"></fx-icon><fx-icon name="caret" style="margin-left:1px"></fx-icon>
  <fx-icon name="grid" style="margin-left:5px"></fx-icon><fx-icon name="caret" style="margin-left:0"></fx-icon>
  <fx-icon name="views" style="margin-left:3px"></fx-icon><fx-icon name="caret" style="margin-left:3px"></fx-icon>`);

plain('fx-viewcube', `
  <style>
    :host { display: block; width: 80px; height: 80px; font-family: Roboto, sans-serif; }
    .cube { position: absolute; left: 5px; top: 31px; width: 44px; height: 44px; background: #d6d6d6; border: 1px solid #c4c4c4; box-sizing: border-box; display: flex; align-items: center; justify-content: center; }
    .inner { width: 27px; height: 27px; background: #dcdcdc; display: flex; align-items: center; justify-content: center; }
    .inner span { transform: rotate(90deg); font: 500 10px Roboto, sans-serif; letter-spacing: .3px; color: #979797; white-space: nowrap; }
    .xa { position: absolute; left: 4px; top: 24px; width: 1.500px; height: 52px; background: #ff9a9a; }
    .ya { position: absolute; left: 5px; top: 74px; width: 52px; height: 1.500px; background: #8cf58c; }
    .xl { position: absolute; left: 1px; top: 11px; font-size: 10.5px; font-weight: 500; color: #ff9a9a; }
    .yl { position: absolute; left: 59px; top: 69px; font-size: 10.5px; font-weight: 500; color: #8cf58c; }
  </style>
  <div class="cube"><div class="inner"><span>BOTTOM</span></div></div>
  <div class="xa"></div><div class="ya"></div><div class="xl">X</div><div class="yl">Y</div>`);

const TL = 's f F t m F d f f F d m d d f f m f f f f f f f f f f m f f f f f X D e D f m r f m r | f t m f f f m m b r r r r f r f e e D D c s f t m r r f f'.split(' ');
const TL_ICON = { s: 'tlsketch', f: 'fill', F: 'fill', t: 'tltrim', m: 'tlmirror', d: 'tldel', e: 'tlext', X: 'tlext', D: 'tld', r: 'tlerase', b: 'tlbody', c: 'tlplane' };

class FxTimeline extends HTMLElement {
  constructor() {
    super();
    let cells = '';
    let faded = false;
    for (const t of TL) {
      if (t === '|') { faded = true; continue; }
      const size = t === 'f' || t === 'F' ? 'w="13" h="13"' : 'w="15" h="15"';
      cells += `<div class="cell ${t === 'F' ? 'hi' : ''} ${t === 'X' ? 'cur' : ''} ${faded ? 'fade' : ''}"><fx-icon name="${TL_ICON[t]}" ${size}></fx-icon></div>`;
    }
    this.attachShadow({ mode: 'open' }).innerHTML = `
      <style>
        :host { display: block; height: 42px; background: #f0f0f0; border-top: 1px solid #d0d0d0; box-sizing: border-box; flex: none; position: relative; }
        .scroll { height: 5px; width: 294px; margin-left: 3px; background: #c2c2c2; border-radius: 0 0 4px 4px; }
        .low { display: flex; height: 36px; }
        .ctl { width: 120px; display: flex; align-items: center; flex: none; padding: 0 0 0 9px; box-sizing: border-box; height: 28px; margin-top: 5px; }
        .ctl fx-icon { margin-right: 10px; }
        .track { position: relative; width: 1440px; }
        .band { height: 5px; width: 857px; background: #fdd27c; margin-top: 1px; }
        .cells { display: flex; height: 20px; margin: -1px 0 0 -3px; position: relative; }
        .cell { width: 20px; height: 20px; display: flex; align-items: center; justify-content: center; flex: none; }
        .cell.hi { background: #dde21f; }
        .cell.cur { background: #d8d8d8; }
        .cell.fade { opacity: .32; }
        .rule { height: 4px; margin-left: 9px; width: 1424px; border-bottom: 2px solid #b8b8b8; position: relative;
          background: repeating-linear-gradient(90deg, transparent 0 18px, #bbb 18px 19px, transparent 19px 20px); }
        .rule:after { content: ""; position: absolute; left: 1426px; bottom: -2px; width: 10px; border-bottom: 2px dotted #bbb; }
        .marker { position: absolute; left: 857px; top: 3px; width: 2px; height: 27px; background: #606060; }
        .marker:before { content: ""; position: absolute; left: -4px; top: 0; border: 5px solid transparent; border-top: 7px solid #606060; border-bottom: 0; }
        .gear { position: absolute; right: 11px; top: 17px; }
      </style>
      <div class="scroll"></div>
      <div class="low">
        <div class="ctl">
          <fx-icon name="first"></fx-icon><fx-icon name="prev"></fx-icon><fx-icon name="play"></fx-icon><fx-icon name="next"></fx-icon><fx-icon name="last"></fx-icon>
        </div>
        <div class="track">
          <div class="band"></div>
          <div class="cells">${cells}</div>
          <div class="rule"></div>
          <div class="marker"></div>
        </div>
      </div>
      <fx-icon class="gear" name="gear2"></fx-icon>`;
  }
}
customElements.define('fx-timeline', FxTimeline);

class FxTask extends HTMLElement {
  connectedCallback() {
    this.attachShadow({ mode: 'open' }).innerHTML = `
      <style>
        :host { display: flex; width: 41px; height: 33px; align-items: center; justify-content: center; box-sizing: border-box; flex: none; padding-bottom: 1px; position: relative; }
        :host([open]):after { content: ""; position: absolute; left: 4px; right: 4px; bottom: 0; height: 2px; background: #2f82d4; }
        :host([active]) { background: #eff1f2; box-shadow: inset 0 -2px 0 #2f82d4; }
      </style>
      <fx-icon name="${this.getAttribute('name')}"></fx-icon>`;
  }
}
customElements.define('fx-task', FxTask);

plain('fx-taskbar', `
  <style>
    :host { display: flex; height: 33px; flex: none; align-items: stretch;
      background: linear-gradient(90deg, #e8dcd3 0, #e6ddd6 350px, #dfe1e1 480px, #dde0e1 736px, #e6dcd4 780px, #e7dcd3 1600px);
      font: 12px Roboto, "Liberation Sans", sans-serif; color: #222; }
    .start { width: 41px; display: flex; align-items: center; justify-content: center; flex: none; }
    .search { width: 285px; background: #fff; margin-top: 1px; display: flex; align-items: center; padding-left: 10px; box-sizing: border-box; flex: none; }
    .search span { margin-left: 9px; font-size: 12.2px; color: #333; }
    .tasks { display: flex; flex: none; }
    .tray { display: flex; align-items: center; flex: 1; justify-content: flex-end; padding-right: 9px; }
    .clock { width: 66px; text-align: center; font-size: 9.8px; line-height: 15.5px; }
    .note { position: relative; width: 29px; height: 33px; display: flex; align-items: center; justify-content: center; }
    .badge { position: absolute; left: 10px; top: 15px; width: 15px; height: 15px; border-radius: 50%; background: #a9a9a9; border: 1px solid #555; box-sizing: border-box; display: flex; align-items: center; justify-content: center; font-size: 9px; color: #111; font-weight: 500; }
    .t { margin-left: 8px; white-space: nowrap; }
  </style>
  <div class="start"><fx-icon name="win"></fx-icon></div>
  <div class="search"><fx-icon name="search"></fx-icon><span>Type here to search</span></div>
  <div class="tasks">
    <fx-task name="cortana" style="margin-left:-1px"></fx-task><fx-task name="taskview"></fx-task>
    <fx-task name="store"></fx-task><fx-task name="edge"></fx-task>
    <fx-task name="mail"></fx-task><fx-task name="explorer" open></fx-task><fx-task name="chrome" open></fx-task>
    <fx-task name="opera"></fx-task><fx-task name="firefox"></fx-task><fx-task name="home"></fx-task>
    <fx-task name="fusion" active></fx-task><fx-task name="hp" open></fx-task><fx-task name="photos" open></fx-task><fx-task name="conf" open></fx-task>
  </div>
  <div class="tray">
    <fx-icon name="cloud"></fx-icon>
    <span class="t" style="margin-left:5px">13°C</span><span class="t">Mostly cloudy</span>
    <fx-icon name="up" style="margin-left:12px"></fx-icon>
    <fx-icon name="battery" style="margin-left:8px"></fx-icon>
    <fx-icon name="wifi" style="margin-left:8px"></fx-icon>
    <fx-icon name="volume" style="margin-left:7px"></fx-icon>
    <fx-icon name="meet" style="margin-left:7px"></fx-icon>
    <span class="t" style="font-size:10.5px">ENG</span>
    <div class="clock">10:08 AM<br>11/19/2021</div>
    <div class="note"><fx-icon name="note" style="margin:-8px 0 0 -9px"></fx-icon><div class="badge">21</div></div>
  </div>`);
</script>
</body>
</html>
